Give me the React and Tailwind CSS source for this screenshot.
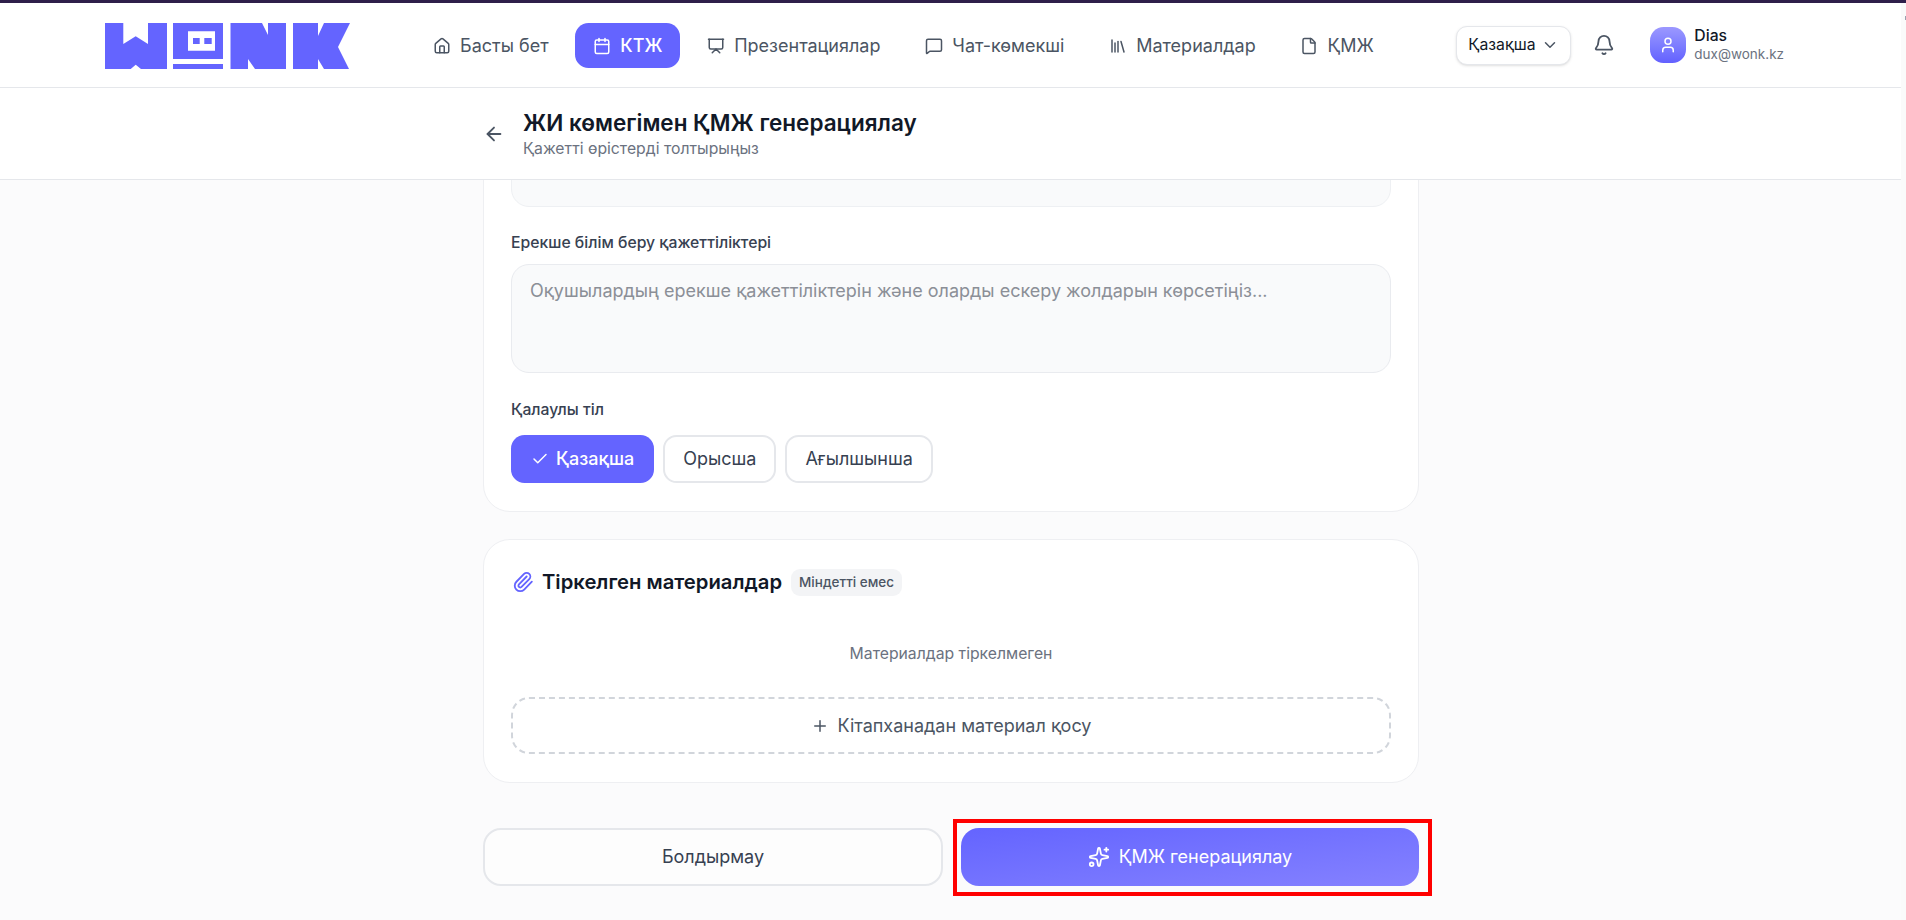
import {
  ArrowLeft,
  Bell,
  Calendar,
  Check,
  ChevronDown,
  File,
  House,
  Library,
  MessageSquare,
  Paperclip,
  Plus,
  Presentation,
  Sparkles,
  User,
} from "lucide-react";

const navItems = [
  { label: "Басты бет", icon: House },
  { label: "КТЖ", icon: Calendar, active: true },
  { label: "Презентациялар", icon: Presentation },
  { label: "Чат-көмекші", icon: MessageSquare },
  { label: "Материалдар", icon: Library },
  { label: "ҚМЖ", icon: File },
];

function Logo() {
  return (
    <svg width="245" height="46" viewBox="0 0 245 46" className="mt-[2px] shrink-0" fill="#6464ff">
      {/* W */}
      <path d="M0 0H18.3V21L30.7 13.3L43 21V0H62V46H36L30.7 41.7L25.7 46H0Z" />
      {/* O with the little window */}
      <path
        fillRule="evenodd"
        d="M68 0H118V36H68ZM83 8.300V27.700H110V8.300Z"
      />
      <path d="M88 15H94.700V21H88ZM99.300 15H106.700V21H99.300Z" />
      <rect x="68" y="41" width="50" height="5" />
      {/* N */}
      <path d="M125.500 0H157L163 12V0H181V46H150L143 36V46H125.500Z" />
      {/* K */}
      <path d="M188 0H213V13L219 0H245L233 24L244 46H219L213 36V46H188Z" />
    </svg>
  );
}

function Header() {
  return (
    <header className="flex h-[85px] items-center border-b border-[#e5e7eb] bg-white pl-[105px] pr-[117px]">
      <Logo />
      <nav className="ml-[65px] flex items-center gap-[8.8px]">
        {navItems.map(({ label, icon: Icon, active }) => (
          <a
            key={label}
            className={
              active
                ? "mt-px flex h-[45px] items-center gap-[9px] rounded-[13.5px] bg-[#6464ff] px-[18px] text-lg font-medium text-white"
                : "mt-px flex h-[45px] items-center gap-[9px] rounded-[13.5px] px-[18px] text-lg font-normal text-[#4b5563]"
            }
          >
            <Icon size={18} strokeWidth={2} />
            {label}
          </a>
        ))}
      </nav>
      <div className="ml-auto flex items-center">
        <button className="flex h-[39px] w-[115px] items-center justify-between rounded-[11px] border border-[#e5e7eb] bg-white px-[11px] text-[15.75px] text-[#111827] shadow-sm">
          Қазақша
          <ChevronDown size={18} className="text-[#4b5563]" />
        </button>
        <Bell size={22} className="ml-[22px] text-[#4b5563]" />
        <div className="ml-[35px] flex items-center gap-2">
          <div className="flex h-9 w-9 items-center justify-center rounded-[13.5px] bg-gradient-to-b from-[#9c98ff] to-[#6360ff]">
            <User size={18} className="text-white" />
          </div>
          <div>
            <p className="text-[15.75px] leading-[19px] font-medium text-[#111827]">Dias</p>
            <p className="text-[13.5px] leading-[19px] text-[#6b7280]">dux@wonk.kz</p>
          </div>
        </div>
      </div>
    </header>
  );
}

function SubHeader() {
  return (
    <div className="flex h-[92px] items-center border-b border-[#e5e7eb] bg-white pl-[483px]">
      <ArrowLeft size={22} className="text-[#4b5563]" />
      <div className="ml-[18px]">
        <h1 className="text-[22.5px] leading-[30px] font-semibold text-[#111827]">ЖИ көмегімен ҚМЖ генерациялау</h1>
        <p className="text-[15.75px] leading-[22px] text-[#6b7280]">Қажетті өрістерді толтырыңыз</p>
      </div>
    </div>
  );
}

function LanguageButtons() {
  return (
    <div className="flex gap-[9px]">
      <button className="flex h-12 items-center gap-[7px] rounded-[13.5px] bg-[#6464ff] px-5 text-lg font-medium text-white">
        <Check size={18} />
        Қазақша
      </button>
      <button className="flex h-12 items-center rounded-[13.5px] border-2 border-[#e5e7eb] bg-white px-[18px] text-lg text-[#374151]">
        Орысша
      </button>
      <button className="flex h-12 items-center rounded-[13.5px] border-2 border-[#e5e7eb] bg-white px-[18px] text-lg text-[#374151]">
        Ағылшынша
      </button>
    </div>
  );
}

export default function App() {
  return (
    <div className="flex h-[920px] flex-col overflow-hidden bg-[#fbfbfc] font-[Inter,sans-serif]">
      <div className="h-[3px] shrink-0 bg-[#2e1f4a]" />
      <div className="flex min-h-0 flex-1">
        <div className="flex min-w-0 flex-1 flex-col">
          <Header />
          <SubHeader />
          <main className="min-h-0 flex-1 overflow-hidden">
            <div className="ml-[483px] w-[936px]">
              {/* page is scrolled, first card starts above the fold */}
              <section className="-mt-[101px] rounded-[27px] border border-[#eeeff2] bg-white px-[27px] pt-[27px] pb-[28px]">
                <div className="h-[100px] rounded-[18px] border border-[#eef0f3] bg-[#f9fafb]" />
                <label className="mt-[26px] mb-[11px] block text-[15.75px] leading-5 font-medium text-[#374151]">
                  Ерекше білім беру қажеттіліктері
                </label>
                <div className="h-[109px] rounded-[18px] border border-[#e9ebef] bg-[#f9fafb] px-[18px] py-[12px] text-lg leading-7 text-[#8b8f97]">
                  Оқушылардың ерекше қажеттіліктерін және оларды ескеру жолдарын көрсетіңіз...
                </div>
                <label className="mt-[27px] mb-[15px] block text-[15.75px] leading-5 font-medium text-[#374151]">
                  Қалаулы тіл
                </label>
                <LanguageButtons />
              </section>

              <section className="mt-[27px] rounded-[27px] border border-[#eeeff2] bg-white px-[27px] pt-[27px] pb-[28px]">
                <div className="flex h-[30px] items-center">
                  <Paperclip size={22} strokeWidth={2} className="ml-px text-[#6464ff]" />
                  <h2 className="ml-2 text-[20.25px] font-semibold text-[#111827]">Тіркелген материалдар</h2>
                  <span className="ml-[9px] rounded-[9px] bg-[#f3f4f6] px-2 py-1 text-[13.5px] leading-[19px] font-medium text-[#4b5563]">
                    Міндетті емес
                  </span>
                </div>
                <p className="mt-[47px] mb-[33px] text-center text-[15.75px] leading-5 text-[#6b7280]">
                  Материалдар тіркелмеген
                </p>
                <button className="flex h-[57px] w-full items-center justify-center gap-[9px] rounded-[18px] border-2 border-dashed border-[#d1d5db] text-lg text-[#4b5563]">
                  <Plus size={18} />
                  Кітапханадан материал қосу
                </button>
              </section>

              <div className="mt-[45px] grid grid-cols-[460px_1fr] gap-[18px]">
                <button className="h-[58px] rounded-[18px] border-2 border-[#e5e7eb] bg-[#fdfdfd] text-lg font-normal text-[#374151]">
                  Болдырмау
                </button>
                <div className="relative">
                  <button className="flex h-[58px] w-full items-center justify-center gap-[9px] rounded-[18px] bg-gradient-to-br from-[#6464ff] to-[#8581ff] text-lg font-normal text-white">
                    <Sparkles size={22} />
                    ҚМЖ генерациялау
                  </button>
                  {/* red annotation frame from the screenshot */}
                  <div className="pointer-events-none absolute -top-[9px] -right-[13px] -bottom-[10px] -left-[8px] border-4 border-[#ff0000]" />
                </div>
              </div>
            </div>
          </main>
        </div>
        <div className="w-[5px] shrink-0 bg-[#fafafa] pt-[13px]">
          <div className="ml-auto h-1 w-px bg-gray-400" />
        </div>
      </div>
    </div>
  );
}
